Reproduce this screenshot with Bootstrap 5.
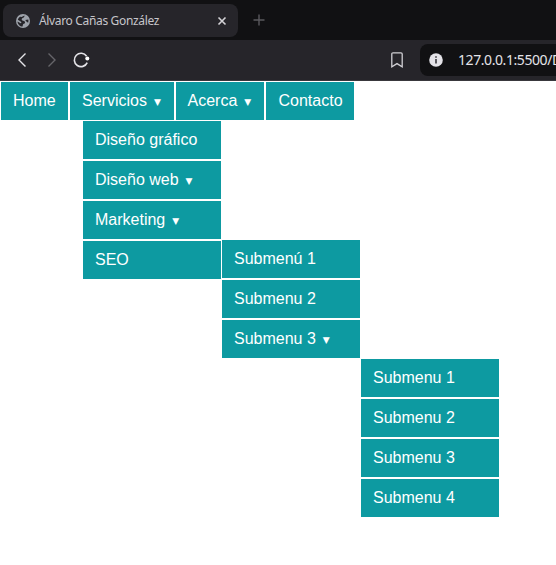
<!DOCTYPE html>
<html lang="es">
<head>
<meta charset="utf-8">
<meta name="viewport" content="width=device-width, initial-scale=1">
<title>Álvaro Cañas González</title>
<link href="https://cdn.jsdelivr.net/npm/bootstrap@5.3.0/dist/css/bootstrap.min.css" rel="stylesheet">
<style>
body { font: 16px/18px "Liberation Sans", Arial, sans-serif; }
.tab-strip { height: 40px; background: #111113; padding: 4px 0 0 3px; }
.browser-tab { width: 235px; height: 33px; border-radius: 8px; background: #26252a; color: #c6c5ca; padding: 0 11px 0 13px; font: 12px/33px "Noto Sans", sans-serif; }
.tab-title { margin-left: 9px; letter-spacing: -.34px; }
.new-tab { margin: 10px 0 0 15px; }
.toolbar { height: 41px; background: #26252a; border-bottom: 1px solid #39383d; padding-left: 14px; }
.bookmark { margin-right: 17px; }
.address { width: 136px; height: 32px; border-radius: 8px 0 0 8px; background: #111113; color: #e4e3e8; padding-left: 9px; font: 14px/32px "Noto Sans", sans-serif; overflow: hidden; }
.url { margin-left: 15px; letter-spacing: -.42px; }
.menu-item { height: 40px; border: 1px solid #fff; background: #0d9aa1; }
.menu-item > a { height: 38px; padding: 10px 12px; color: #fff; }
.menu-item .caret { font: 9px/10px "DejaVu Sans", sans-serif; margin-left: 7px; vertical-align: 1px; }
.w-home { width: 69px; } .w-services { width: 106px; } .w-about { width: 90px; } .w-contact { width: 90px; }
.w-about > a { padding-left: 11.5px; }
.w-contact > a { padding-left: 12.5px; }
.submenu { width: 140px; top: 38px; left: 12px; z-index: 2; }
.submenu .submenu { left: 138px; }
</style>
<script src="https://cdn.jsdelivr.net/npm/bootstrap@5.3.0/dist/js/bootstrap.bundle.min.js"></script>
</head>
<body class="bg-white min-vh-100">
<header>
  <div class="tab-strip d-flex align-items-start">
    <div class="browser-tab d-flex align-items-center">
      <svg class="flex-shrink-0" width="14" height="14" viewBox="0 0 14 14"><circle cx="7" cy="7" r="7" fill="#9da2aa"/><path d="M8.5 1.6 C8.6 3.4 7.6 3.6 6.6 4.1 C5.2 4.8 5.4 6.5 7 6.7 C8.7 6.9 9.2 7.5 9 8.7 C8.7 9.9 7.2 9.4 6.9 10.7 L6.6 12.5 C3.8 12.4 1.7 10.2 1.5 7.4 L4.6 9.2 C5.6 9.2 5.6 8 4.6 7.4 L1.8 5.8 C2.3 4.6 3 3.5 4.2 2.8 L5.6 3 Z M9.2 6 L12.3 5.6 C12.6 6.6 12.5 7.8 12.1 8.8 L10.4 7.5 Z" fill="#26252a"/></svg>
      <span class="tab-title text-nowrap">Álvaro Cañas González</span>
      <svg class="ms-auto flex-shrink-0" width="10" height="10" viewBox="0 0 10 10"><path d="M1.5 1.5 8.5 8.5 M8.5 1.5 1.5 8.5" stroke="#d4d3d7" stroke-width="1.6"/></svg>
    </div>
    <svg class="new-tab" width="12" height="12" viewBox="0 0 12 12"><path d="M6 .5 V11.5 M.5 6 H11.5" stroke="#5a595e" stroke-width="1.4"/></svg>
  </div>
  <div class="toolbar d-flex align-items-center">
    <svg width="80" height="20" viewBox="0 0 80 20" fill="none" stroke-width="1.4"><path d="M11.5 3.5 5 10 11.5 16.5" stroke="#e5e4e8"/><path d="M34.5 3.5 41 10 34.5 16.5" stroke="#66656a"/><path d="M72.6 6.2 A6.7 6.7 0 1 0 73.2 12.6" stroke="#e5e4e8" stroke-width="1.6"/><circle cx="73.3" cy="8.4" r="2" fill="#fff"/></svg>
    <svg class="bookmark ms-auto" width="12" height="16" viewBox="0 0 12 16"><path d="M.8 2 Q.8 .8 2 .8 H10 Q11.2 .8 11.2 2 V14.8 L6 11.6 .8 14.8 Z" fill="none" stroke="#d0cfd4" stroke-width="1.3"/></svg>
    <div class="address d-flex align-items-center flex-shrink-0">
      <svg class="flex-shrink-0" width="14" height="14" viewBox="0 0 14 14"><circle cx="7" cy="7" r="6.8" fill="#e4e3e8"/><path d="M7 6 V10.5 M7 3.2 V4.8" stroke="#37363b" stroke-width="1.6"/></svg>
      <span class="url text-nowrap">127.0.0.1:5500/D</span>
    </div>
  </div>
</header>
<nav>
  <ul class="d-flex list-unstyled m-0">
    <li class="menu-item w-home"><a class="d-block text-decoration-none text-nowrap" href="#">Home</a></li>
    <li class="menu-item w-services position-relative"><a class="d-block text-decoration-none text-nowrap" href="#">Servicios<span class="caret">▼</span></a>
      <ul class="submenu position-absolute list-unstyled m-0">
        <li class="menu-item"><a class="d-block text-decoration-none" href="#">Diseño gráfico</a></li>
        <li class="menu-item"><a class="d-block text-decoration-none" href="#">Diseño web<span class="caret">▼</span></a></li>
        <li class="menu-item position-relative"><a class="d-block text-decoration-none" href="#">Marketing<span class="caret">▼</span></a>
          <ul class="submenu position-absolute list-unstyled m-0">
            <li class="menu-item"><a class="d-block text-decoration-none" href="#">Submenú 1</a></li>
            <li class="menu-item"><a class="d-block text-decoration-none" href="#">Submenu 2</a></li>
            <li class="menu-item position-relative"><a class="d-block text-decoration-none" href="#">Submenu 3<span class="caret">▼</span></a>
              <ul class="submenu position-absolute list-unstyled m-0">
                <li class="menu-item"><a class="d-block text-decoration-none" href="#">Submenu 1</a></li>
                <li class="menu-item"><a class="d-block text-decoration-none" href="#">Submenu 2</a></li>
                <li class="menu-item"><a class="d-block text-decoration-none" href="#">Submenu 3</a></li>
                <li class="menu-item"><a class="d-block text-decoration-none" href="#">Submenu 4</a></li>
              </ul>
            </li>
          </ul>
        </li>
        <li class="menu-item"><a class="d-block text-decoration-none" href="#">SEO</a></li>
      </ul>
    </li>
    <li class="menu-item w-about"><a class="d-block text-decoration-none text-nowrap" href="#">Acerca<span class="caret">▼</span></a></li>
    <li class="menu-item w-contact"><a class="d-block text-decoration-none text-nowrap" href="#">Contacto</a></li>
  </ul>
</nav>
</body>
</html>
